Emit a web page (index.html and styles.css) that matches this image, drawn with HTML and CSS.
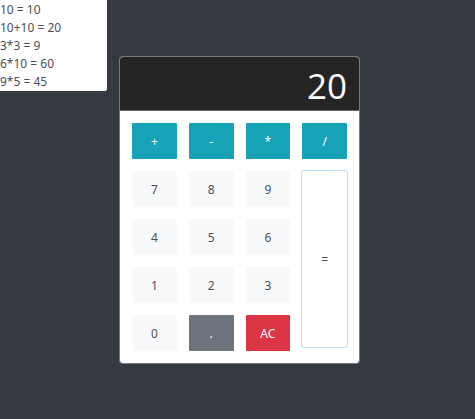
FILE: index.html
```html
<!DOCTYPE html>
<html lang="en">
<head>
<meta charset="utf-8">
<meta name="viewport" content="width=device-width, initial-scale=1">
<title>Calculator</title>
<link rel="stylesheet" href="styles.css">
</head>
<body>
<div class="page">
  <ul class="history">
    <li>10 = 10</li>
    <li>10+10 = 20</li>
    <li>3*3 = 9</li>
    <li>6*10 = 60</li>
    <li>9*5 = 45</li>
  </ul>
  <main class="calculator">
    <input class="screen" type="text" value="20" aria-label="Result" readonly>
    <div class="keys">
      <button type="button" class="key operator">+</button>
      <button type="button" class="key operator">-</button>
      <button type="button" class="key operator">*</button>
      <button type="button" class="key operator">/</button>
      <button type="button" class="key">7</button>
      <button type="button" class="key">8</button>
      <button type="button" class="key">9</button>
      <button type="button" class="key equals">=</button>
      <button type="button" class="key">4</button>
      <button type="button" class="key">5</button>
      <button type="button" class="key">6</button>
      <button type="button" class="key">1</button>
      <button type="button" class="key">2</button>
      <button type="button" class="key">3</button>
      <button type="button" class="key">0</button>
      <button type="button" class="key decimal">.</button>
      <button type="button" class="key clear">AC</button>
    </div>
  </main>
</div>
</body>
</html>
```

FILE: styles.css
```css
* {
  box-sizing: border-box;
}

body {
  margin: 0;
  min-height: 100vh;
  background: #353a42;
  color: #4c5054;
  font-family: "Noto Sans", "Open Sans", sans-serif;
  font-size: 12px;
}

.page {
  display: flex;
  align-items: flex-start;
  gap: 12px;
}

.history {
  flex: 0 0 auto;
  width: 107px;
  margin: 0;
  padding: 1px 0 0;
  list-style: none;
  line-height: 18px;
  background: #fff;
  border-radius: 0 0 2px 0;
}

.calculator {
  flex: 0 1 241px;
  margin-top: 56px;
  overflow: hidden;
  background: #fff;
  border: 1px solid #777a7c;
  border-radius: 4px;
}

.screen {
  display: block;
  width: 100%;
  height: 54px;
  padding: 4px 12px 0;
  border: 0;
  border-bottom: 1px solid #666;
  border-radius: 0;
  outline: 0;
  background: #252525;
  color: #fff;
  font-family: "Open Sans", "Noto Sans", sans-serif;
  font-size: 35px;
  text-align: right;
}

.keys {
  display: grid;
  grid-template-columns: repeat(4, 1fr);
  grid-auto-rows: 36px;
  gap: 12px;
  padding: 12px;
}

.key {
  padding: 0;
  border: 0;
  border-radius: 1px;
  background: #f8f9fb;
  color: inherit;
  font: inherit;
}

.operator {
  background: #18a2b8;
  color: #fff;
}

.equals {
  grid-column: 4;
  grid-row: 2 / span 4;
  margin-bottom: 4px;
  border-radius: 2px;
  background: #fff;
  box-shadow: 0 0 0 1px #bfdffc;
}

.decimal {
  background: #6c757d;
  color: #fff;
}

.clear {
  background: #dc3545;
  color: #fff;
}
```
